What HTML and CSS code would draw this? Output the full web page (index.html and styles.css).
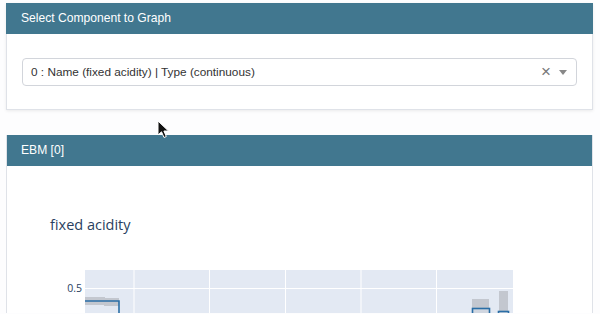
FILE: index.html
```html
<!DOCTYPE html>
<html lang="en">
<head>
    <meta name="viewport" content="width=device-width, initial-scale=1.0" />
    <title>EBM Component Graph</title>
    <link rel="stylesheet" href="styles.css">
</head>
<body>
    <div class="card">
        <div class="card-header">Select Component to Graph</div>
        <div class="card-body">
            <div class="select-box">
                <span class="select-value">0 : Name (fixed acidity) | Type (continuous)</span>
                <span class="select-clear">&times;</span>
                <span class="select-arrow"></span>
            </div>
        </div>
    </div>

    <div class="card graph-card">
        <div class="card-header">EBM [0]</div>
        <div class="graph-body">
            <!-- viewBox uses page coordinates -->
            <svg class="graph" viewBox="7 166 585 147" width="585" height="147">
                <text x="50" y="230" class="graph-title">fixed acidity</text>
                <rect x="85" y="270" width="428" height="50" fill="#e3e9f3" />
                <g stroke="#ffffff" stroke-width="1">
                    <line x1="134" y1="270" x2="134" y2="320" />
                    <line x1="209.5" y1="270" x2="209.5" y2="320" />
                    <line x1="285.5" y1="270" x2="285.5" y2="320" />
                    <line x1="361" y1="270" x2="361" y2="320" />
                    <line x1="436.5" y1="270" x2="436.5" y2="320" />
                    <line x1="85" y1="288.5" x2="513" y2="288.5" />
                </g>
                <text x="82" y="292" class="tick">0.5</text>
                <rect x="85" y="297" width="20" height="8" fill="#c3c7cf" />
                <rect x="104" y="298" width="15" height="8" fill="#c3c7cf" />
                <path d="M85 301 H119 V320" fill="none" stroke="#2a6ea6" stroke-width="1.6" />
                <rect x="472" y="299" width="17" height="20" fill="#c3c7cf" />
                <rect x="472.5" y="308.5" width="17" height="10" fill="#d0d6e0" stroke="#2a6ea6" stroke-width="1.6" />
                <rect x="499" y="291" width="9" height="28" fill="#c3c7cf" />
                <rect x="498.5" y="311.5" width="10" height="8" fill="#d0d6e0" stroke="#2a6ea6" stroke-width="1.6" />
            </svg>
        </div>
    </div>

    <svg class="cursor" width="14" height="20" viewBox="0 0 14 20">
        <path d="M1 1 L1 15 L4.5 11.8 L7 17.5 L9.3 16.5 L6.9 11 L11.5 11 Z" fill="#111" stroke="#fff" stroke-width="1" />
    </svg>
</body>
</html>
```

FILE: styles.css
```css
* {
    padding: 0;
    margin: 0;
    box-sizing: border-box;
}
body {
    background-color: #fdfdfe;
    font-family: "Liberation Sans", Arial, sans-serif;
    padding: 3px 7px 0 6px;
    position: relative;
    height: 314px;
    overflow: hidden;
}
.card {
    background-color: #ffffff;
    border: 1px solid #dfe2e8;
    border-top: none;
    box-shadow: 0 1px 3px rgba(0, 0, 0, 0.08);
}
.card-header {
    background-color: #41778f;
    color: #ffffff;
    font-size: 12.1px;
    height: 31px;
    line-height: 31px;
    padding-left: 15px;
    margin: 0 -1px;
}
.card-body {
    padding: 24px 15px 23px 15px;
}
.select-box {
    height: 28px;
    border: 1px solid #d2d5db;
    border-radius: 4px;
    display: flex;
    align-items: center;
    padding: 0 8px;
    color: #333333;
    font-size: 11.8px;
}
.select-value {
    flex: 1;
}
.select-clear {
    color: #777777;
    font-size: 17px;
    margin-right: 8px;
}
.select-arrow {
    width: 0;
    height: 0;
    border-left: 4.5px solid transparent;
    border-right: 4.5px solid transparent;
    border-top: 5px solid #888888;
    margin-right: 1px;
}
.graph-card {
    margin-top: 25px;
    box-shadow: none;
    border-bottom: none;
    height: 178px;
    overflow: hidden;
}
.graph {
    display: block;
}
.graph-title {
    font-family: "Open Sans", sans-serif;
    font-size: 14.5px;
    fill: #2a3f5f;
}
.tick {
    font-family: "Open Sans", sans-serif;
    font-size: 10.5px;
    fill: #2a3f5f;
    text-anchor: end;
}
.cursor {
    position: absolute;
    left: 157px;
    top: 120px;
}
```
